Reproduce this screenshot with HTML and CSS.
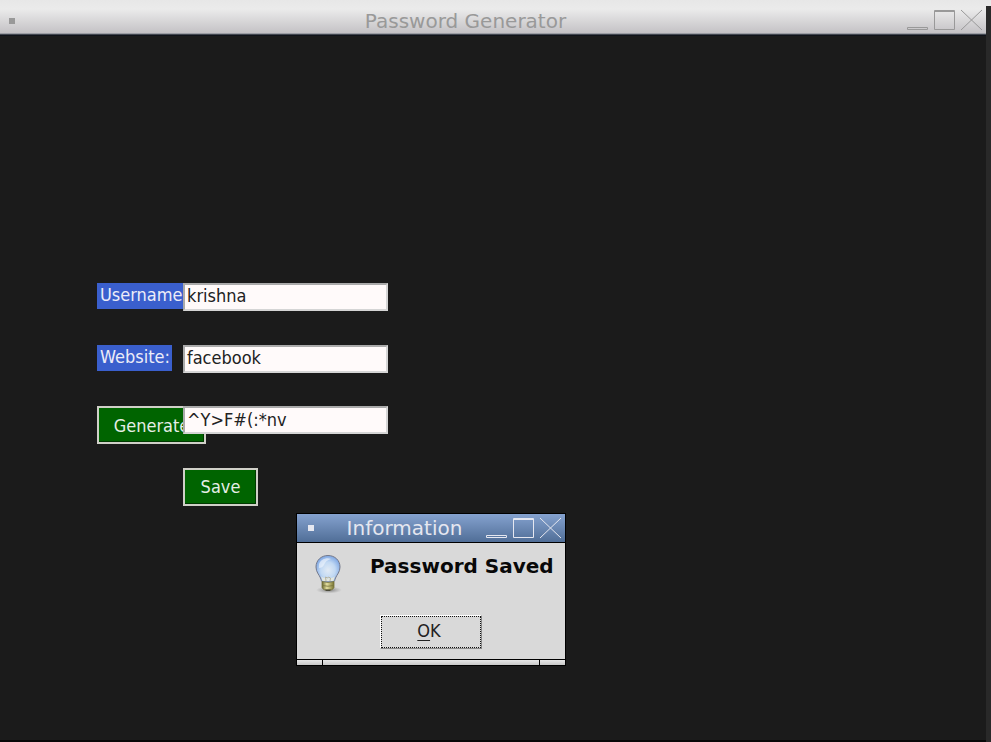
FILE: index.html
```html
<!DOCTYPE html>
<html lang="en">
<head>
<meta charset="utf-8">
<title>Password Generator</title>
<link rel="stylesheet" href="styles.css">
</head>
<body>
<main class="window">
  <header class="titlebar">
    <span class="menu-dot"></span>
    <h1 class="title">Password Generator</h1>
    <svg class="controls" width="78" height="24" viewBox="0 0 78 24" fill="none" stroke="currentColor">
      <path d="M1.500 18.500h20v2h-20z"/><path d="M28.500 1.500h20v19h-20zM28 2.500h21"/><path d="M55 1l21 20M76 1L55 21"/>
    </svg>
  </header>
  <form class="form">
    <label class="label">Username:</label>
    <div class="entry">krishna</div>
    <label class="label">Website:</label>
    <div class="entry">facebook</div>
    <button type="button" class="button">Generate</button>
    <div class="entry generated">^Y&gt;F#(:*nv</div>
    <button type="button" class="button save">Save</button>
  </form>
  <div class="edge"></div>
</main>
<section class="dialog">
  <header class="dialog-bar">
    <span class="menu-dot"></span>
    <h2 class="title">Information</h2>
    <svg class="controls" width="78" height="24" viewBox="0 0 78 24" fill="none" stroke="currentColor">
      <path d="M1.500 19.500h20v2h-20z"/><path d="M28.500 2.500h20v19h-20zM28 3.500h21"/><path d="M55 2l21 20M76 2L55 22"/>
    </svg>
  </header>
  <div class="dialog-body">
    <svg class="bulb" width="32" height="42" viewBox="0 0 32 42">
      <defs>
        <radialGradient id="glass" cx=".5" cy=".55" r=".6"><stop offset="0" stop-color="#e1eaf4"/><stop offset=".5" stop-color="#c2d9f3"/><stop offset="1" stop-color="#719de0"/></radialGradient>
        <linearGradient id="brass"><stop offset="0" stop-color="#66652c"/><stop offset=".4" stop-color="#e5e0a0"/><stop offset="1" stop-color="#77732f"/></linearGradient>
        <radialGradient id="shade"><stop offset="0" stop-color="#777"/><stop offset="1" stop-color="#999" stop-opacity="0"/></radialGradient>
      </defs>
      <ellipse cx="17" cy="36" rx="13" ry="3.5" fill="url(#shade)"/>
      <path d="M16 1.500C9 1.500 4 6.500 4 13c0 5 3 7.500 4.500 11 .7 1.800.8 3.500 2 4h11c1.200-.5 1.300-2.200 2-4C25 20.500 28 18 28 13 28 6.500 23 1.500 16 1.500z" fill="url(#glass)" stroke="#74798b"/>
      <path d="M9 22c2 3 12 3 14 0-1 2-1 5-2 5H11c-1 0-1-3-2-5z" fill="#e2e6df"/>
      <path d="M7 10c2-5 8-7 12-5-4 1-6 3-7 6-1 2-3 3-5 3z" fill="#eef5fc" opacity=".65"/>
      <path d="M14 27l-.5-4 2 1 1-1 2 1-.5 3" fill="none" stroke="#b5b3a0"/>
      <path d="M10 27.500q6 2 12 0v6q-1 2-3 2.500h-6q-2-.5-3-2.500z" fill="url(#brass)" stroke="#77743c" stroke-width=".8"/>
      <path d="M10.500 31.500q5.500 1.500 11 0" fill="none" stroke="#77743c" stroke-width=".8"/>
      <path d="M13 35.500h6l-1 1.500h-4z" fill="#4a4a3a"/>
    </svg>
    <strong class="message">Password Saved</strong>
    <button type="button" class="ok"><u>O</u>K</button>
  </div>
  <footer class="grip"><span></span><span></span><span></span></footer>
</section>
</body>
</html>
```

FILE: styles.css
```css
* { box-sizing: border-box; }
body {
  margin: 0;
  height: 742px;
  overflow: hidden;
  background: #1b1b1b;
  font: 18px "DejaVu Sans Condensed", "DejaVu Sans", sans-serif;
  font-stretch: condensed;
}
.window { height: 742px; display: flex; flex-direction: column; }
.titlebar, .dialog-bar { display: flex; align-items: center; position: relative; }
.titlebar {
  height: 36px;
  flex: none;
  padding: 6px 7px 0 9px;
  color: #999;
  background: linear-gradient(#e7e7e7, #ebebeb 25%, #c4c2c5 33px, #747a84 34px, #10131a 35px);
}
/* strip of the desktop visible beside the window */
.titlebar::after {
  content: "";
  position: absolute;
  right: 0;
  top: 6px;
  width: 5px;
  height: 736px;
  background: #292929;
}
.menu-dot { width: 6px; height: 6px; background: currentColor; flex: none; }
.title {
  flex: 1;
  margin: 0;
  font: 400 20px/24px "DejaVu Sans", sans-serif;
  text-align: center;
}
.titlebar .menu-dot { margin-bottom: 1px; }
.titlebar .title { padding-left: 10px; }
.controls { flex: none; }
.form {
  flex: 1;
  display: grid;
  grid-template-columns: 86px 205px;
  grid-template-rows: 62px 62px 61px 38px;
  align-content: start;
  align-items: start;
  padding: 247px 0 0 97px;
}
.label {
  justify-self: start;
  height: 26px;
  padding: 0 2px 0 3px;
  line-height: 23px;
  color: #ececf8;
  background: #3a5fcd;
}
.entry {
  position: relative;
  z-index: 1;
  height: 28px;
  padding: 0 2px;
  line-height: 22px;
  color: #222;
  background: #fffafa;
  border: 2px solid;
  border-color: #aaa #d5d5d5 #d5d5d5 #aaa;
}
.generated { line-height: 24px; }
.button {
  width: 109px;
  height: 38px;
  padding: 0;
  font: inherit;
  color: #e6eee6;
  background: #006400;
  border: 2px solid #d0d0c8;
  box-shadow: inset -1px -1px #003900;
}
.button:not(.save), .generated { margin-top: -1px; }
.save { grid-column: 2; width: 75px; padding-bottom: 2px; }
.edge { height: 2px; background: #080808; margin-right: 5px; }
.dialog {
  position: absolute;
  left: 296px;
  top: 513px;
  width: 270px;
  height: 153px;
  display: flex;
  flex-direction: column;
  background: #d9d9d9;
  border: 1px solid #000;
}
.dialog-bar {
  height: 29px;
  padding: 0 2px 0 11px;
  color: #e5e7f0;
  background: linear-gradient(#85a2cf, #506e97);
  border-bottom: 1px solid #000;
}
.dialog-bar .title { padding-left: 10px; }
.dialog-body {
  flex: 1;
  display: grid;
  grid-template-columns: 58px 1fr;
  grid-template-rows: 61px 34px;
  padding: 11px 0 0 15px;
}
.message { font: 700 20px/24px "DejaVu Sans", sans-serif; color: #080808; }
.ok {
  grid-column: 1 / -1;
  width: 102px;
  height: 34px;
  margin-left: 68px;
  padding: 0 4px 3px 0;
  font: inherit;
  color: #222;
  background: #d9d9d9;
  border: 1px solid;
  border-color: #fff #888 #888 #fff;
  outline: 1px dotted #111;
  outline-offset: -2px;
}
.ok u { text-underline-offset: 3px; text-decoration-thickness: 1px; }
.grip {
  height: 6px;
  display: grid;
  grid-template-columns: 25px 216px 25px;
  gap: 1px;
  padding-top: 1px;
  background: #000;
}
.grip span { background: linear-gradient(#e8e8e8, #c8c8c8); }
```
